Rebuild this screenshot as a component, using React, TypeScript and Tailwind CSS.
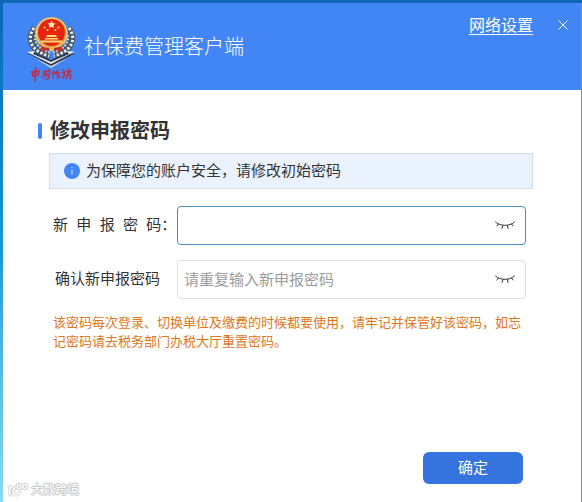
import { useState } from "react";

function TaxEmblem() {
  return (
    <svg viewBox="0 0 52 68" className="h-[68px] w-[52px] shrink-0" role="img" aria-label="中国税务">
      <g fill="none" strokeLinecap="butt">
        <path d="M8 13C0 24 5 36 22 41" stroke="#44566c" strokeWidth="7" />
        <path d="M41 13c8 11 3 23-14 28" stroke="#44566c" strokeWidth="7" />
        <path d="M7 13C-1 24 4 36 22 41" stroke="#eef1ea" strokeWidth="3" strokeDasharray="2.4 1.8" />
        <path d="M42 13c8 11 3 23-15 28" stroke="#eef1ea" strokeWidth="3" strokeDasharray="2.4 1.8" />
        <path d="M11 14C4 24 9 34 24 38" stroke="#dfe5e0" strokeWidth="2" strokeDasharray="1.6 1.8" />
        <path d="M38 14c7 10 2 20-13 24" stroke="#dfe5e0" strokeWidth="2" strokeDasharray="1.6 1.8" />
      </g>
      <path d="M0 38l7-1 17 8 18-8 6 1-5 3-19 11L6 41z" fill="#2f3f56" />
      <path d="M0 37l8-1-2 3 18 8 18-8-2-3 8 1-5 2-19 10L6 40z" fill="#f3f6f8" />
      <path d="M6 42l18 9 18-9-18 11z" fill="#cfd9e2" />
      <circle cx="24.500" cy="18.500" r="16.500" fill="#dfae4c" />
      <circle cx="24.500" cy="18.500" r="15.500" fill="none" stroke="#f0d79a" strokeWidth="1" />
      <circle cx="24.500" cy="17.500" r="13.500" fill="#e52513" />
      <path d="M24.500 5.500l1.200 2.600 2.800.3-2.100 1.900.6 2.800-2.500-1.400-2.500 1.400.6-2.800-2.100-1.900 2.800-.3z" fill="#fff0b0" />
      <g fill="#ffdc70">
        <circle cx="17.500" cy="12.500" r="1" />
        <circle cx="20.500" cy="15" r="1" />
        <circle cx="28.500" cy="15" r="1" />
        <circle cx="31.500" cy="12.500" r="1" />
        <path d="M20 20h9l1 2H19zM18 23h13v1.500H18zM14 25.500h21v2H14z" />
      </g>
      <path d="M12 29c7 3 18 3 25 0-2 4-7 7-12.500 7S14 33 12 29z" fill="#c22a1a" />
      <path d="M14 30c6 3 15 3 21 0" fill="none" stroke="#eec36a" strokeWidth="1.500" />
      <circle cx="24.500" cy="34" r="2.500" fill="#e9bd61" />
      <path d="M14 33l4 4M35 33l-4 4" stroke="#c83226" strokeWidth="2.500" />
      <g fill="none" stroke="#b83350" strokeWidth="1.500" strokeLinecap="round" strokeLinejoin="round">
        <path d="M5 57l1 4 5-1 1-4-7 1M8.500 53l-.5 13" strokeWidth="1.800" />
        <path d="M17 56l-1 7M17 57l6-2-1 8-3 1M18 59h3M19 57l-1 4 3-1" />
        <path d="M27 56l-1 7M25 58h4M29 57l3 1M31 55l-2 4 3 1-2 3M32 60l1 3" />
        <path d="M36 55l1 1M35 58l3-1-2 6M37 60l1 1M42 54l-2 3 4-1-4 4M40 60h4l-1 4M41 59l-2 5" />
      </g>
    </svg>
  );
}

function ClosedEye() {
  return (
    <svg viewBox="0 0 20 10" className="h-[10px] w-[20px]" fill="none" stroke="#35383d" strokeWidth="1" strokeLinecap="round" aria-hidden="true">
      <path d="M.5 1C5 5.500 15 5.500 19.500 1" />
      <path d="M3.500 3L2 5M8 4.500L7 7.500M12.500 4.500L13 7.500M16.500 3L18 5" />
    </svg>
  );
}

interface PasswordFieldProps {
  id: string;
  placeholder?: string;
  active?: boolean;
}

function PasswordField({ id, placeholder, active }: PasswordFieldProps) {
  const [visible, setVisible] = useState(false);
  return (
    <div
      className={
        active
          ? "flex h-[39px] flex-1 items-center rounded border border-[#4a8ac4] bg-white"
          : "flex h-[39px] flex-1 items-center rounded border border-[#dfe1e4] bg-white"
      }
    >
      <input
        id={id}
        type={visible ? "text" : "password"}
        placeholder={placeholder}
        className="h-full min-w-0 flex-1 bg-transparent px-1.5 text-[15px] text-[#333] outline-none placeholder:text-[#9b9b9b]"
      />
      <button
        type="button"
        aria-label="显示或隐藏密码"
        onClick={() => setVisible(!visible)}
        className="flex h-full w-10 items-center justify-center"
      >
        <ClosedEye />
      </button>
    </div>
  );
}

function Watermark() {
  return (
    <div className="absolute bottom-1 left-1 flex items-center gap-0.5">
      <svg viewBox="0 0 22 16" className="h-4 w-[22px]" fill="none" aria-hidden="true">
        <g stroke="#c6c6c6" strokeWidth="3" strokeLinecap="round">
          <path d="M2 5h1v8M8 5.500L6 8v2a3 3 0 0 0 3 3c2 0 3-1 3.500-3" />
          <circle cx="12" cy="4.500" r="2" />
          <circle cx="18" cy="4.500" r="2" />
        </g>
        <g stroke="#fff" strokeWidth="1.500" strokeLinecap="round">
          <path d="M2 5h1v8M8 5.500L6 8v2a3 3 0 0 0 3 3c2 0 3-1 3.500-3" />
          <circle cx="12" cy="4.500" r="2" />
          <circle cx="18" cy="4.500" r="2" />
        </g>
      </svg>
      <span className="text-xs leading-4 text-white [text-shadow:1px_0_#c4c4c4,-1px_0_#c4c4c4,0_1px_#c4c4c4,0_-1px_#c4c4c4]">大数跨境</span>
    </div>
  );
}

export default function App() {
  return (
    <div className="min-h-screen bg-linear-to-b from-[#0c66b4] via-[#139bd5] to-[#86dcf0] pt-[3px] pl-[3px] font-['Liberation_Sans','Noto_Sans_CJK_SC',sans-serif]">
      <div className="relative flex min-h-[calc(100vh-3px)] flex-col border-r border-[#8b8b8b] bg-white">
        <div className="absolute inset-x-0 -top-[3px] h-[3px] bg-[#0d67b5]" />
        <header className="flex h-[87px] items-start bg-[#4285f4] pr-2 pl-6 text-white">
          <div className="pt-3">
            <TaxEmblem />
          </div>
          <h1 className="ml-[5px] flex-1 pt-7 text-xl leading-8 font-light">社保费管理客户端</h1>
          <a href="#network" className="mt-[11px] text-base leading-6 underline underline-offset-3">
            网络设置
          </a>
          <button type="button" aria-label="关闭" className="mt-3 ml-5 flex size-5 items-center justify-center">
            <svg viewBox="0 0 10 10" className="size-[10px]" stroke="currentColor" strokeWidth="1" aria-hidden="true">
              <path d="M.5.5l9 9M9.500.5l-9 9" />
            </svg>
          </button>
        </header>

        <main className="flex flex-1 flex-col pr-12 pl-[35px] pt-[27px]">
          <h2 className="flex h-7 items-center text-xl font-bold text-[#333]">
            <span className="mr-2 h-4 w-1 rounded-sm bg-[#4285f4]" />
            修改申报密码
          </h2>

          <div className="mt-2 ml-[11px] flex h-9 items-center border border-[#cfe0ee] bg-[#eaf3fd] pl-3.5 text-[15px] text-[#333]">
            <svg viewBox="0 0 16 16" className="mr-1.5 size-4" aria-hidden="true">
              <circle cx="8" cy="8" r="8" fill="#4285f4" />
              <path d="M8 4v1M8 6.500V12" stroke="#d3e4ff" strokeWidth="1" />
            </svg>
            为保障您的账户安全，请修改初始密码
          </div>

          <form onSubmit={(e) => e.preventDefault()} className="mt-[17px] flex flex-1 flex-col pr-[7px] pl-[15px]">
            <div className="flex items-center">
              <label htmlFor="new-password" className="w-[124px] text-[15px] whitespace-pre text-[#333]">
                新  申  报  密  码：
              </label>
              <PasswordField id="new-password" active />
            </div>
            <div className="mt-[15px] flex items-center">
              <label htmlFor="confirm-password" className="w-[124px] pl-0.5 text-[15px] text-[#333]">
                确认新申报密码
              </label>
              <PasswordField id="confirm-password" placeholder="请重复输入新申报密码" />
            </div>
            <p className="mt-3.5 text-[13px] leading-[19px] text-[#e0761a]">
              该密码每次登录、切换单位及缴费的时候都要使用，请牢记并保管好该密码，如忘记密码请去税务部门办税大厅重置密码。
            </p>
            <button
              type="submit"
              className="mt-auto mr-[3px] mb-[18px] h-8 w-[100px] self-end rounded-md bg-[#3574dc] text-[15px] text-white"
            >
              确定
            </button>
          </form>
        </main>
        <Watermark />
      </div>
    </div>
  );
}
